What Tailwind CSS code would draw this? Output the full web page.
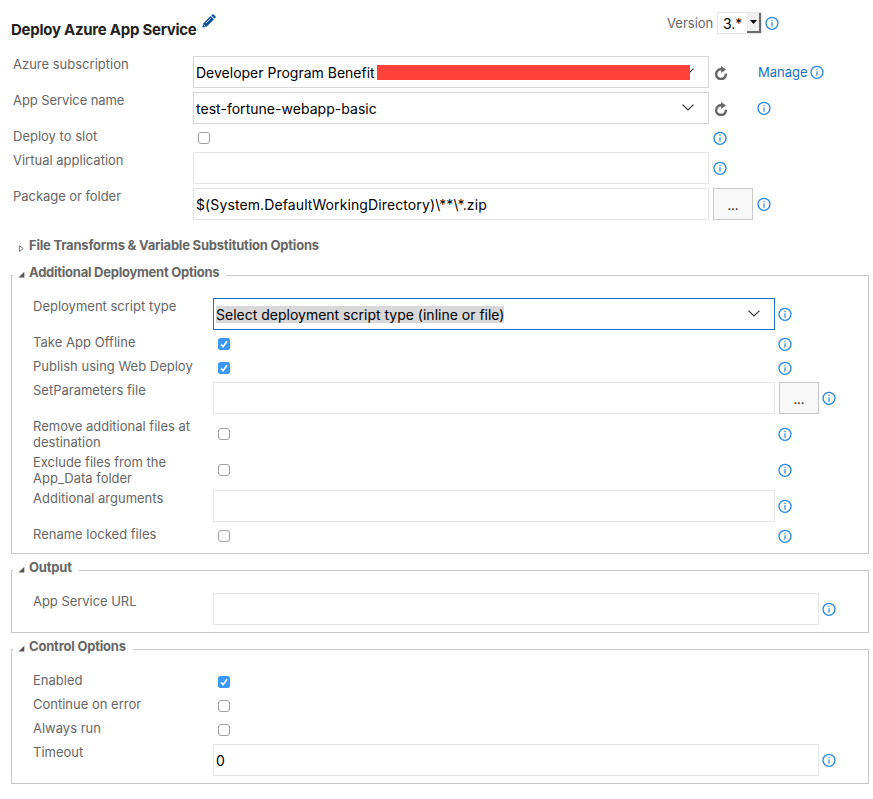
<!DOCTYPE html>
<html lang="en">
<head>
<meta charset="utf-8">
<title>Deploy Azure App Service</title>
<script src="https://cdn.jsdelivr.net/npm/@tailwindcss/browser@4"></script>
</head>
<body class="bg-white font-[Inter,sans-serif] text-[13px] leading-4 text-[#666]">
<svg class="hidden">
  <symbol id="info" viewBox="0 0 14 14"><circle cx="7" cy="7.300" r="6" fill="none" stroke="#2b88d8" stroke-width="1.3"/><path d="M7 6.300v4.400" stroke="#5ba5e3" stroke-width="1.6"/><path d="M7 3.700v1.300" stroke="#5ba5e3" stroke-width="1.6"/></symbol>
  <symbol id="refresh" viewBox="0 0 14 14"><path d="M11.900 7.600A4.900 4.900 0 1 1 7.600 3.300" fill="none" stroke="#666" stroke-width="2.4"/><path d="M7 0l5 3.400L7.200 7z" fill="#666"/></symbol>
  <symbol id="chevron" viewBox="0 0 12 7"><path d="M.5 .6L6 6L11.500 .6" fill="none" stroke="#333" stroke-width="1.2"/></symbol>
  <symbol id="check" viewBox="0 0 12 12"><path d="M3 6.400L5.100 8.700L9 3.200" fill="none" stroke="#fff" stroke-width="1.6"/></symbol>
  <symbol id="open" viewBox="0 0 7 7"><path d="M6.300 .7v5.800H.5z" fill="#555"/></symbol>
</svg>
<main class="h-[799px] w-[873px] overflow-hidden pl-[11px]">
  <header class="flex h-[54px] items-start">
    <h1 class="mt-5 w-[187px] whitespace-nowrap text-[15px] font-bold leading-[19px] tracking-[-0.26px] text-[#222]">Deploy Azure App Service</h1>
    <svg class="ml-1 mt-[14px] size-[14px]" viewBox="0 0 14 14"><path d="M1 9.700L8.600 2.100L11.900 5.400L4.300 13L.4 13.600z" fill="#0b539b"/><path d="M9.300 1.400L10.200.5Q11 0 11.700.6L13.400 2.300Q14 3 13.500 3.800L12.600 4.700z" fill="#0b539b"/><path d="M1.400 10.600L3.500 12.700M4 9l4.700-4.700" stroke="#fff" stroke-width=".8"/></svg>
    <span class="ml-[451px] mt-[15px] w-[50px] whitespace-nowrap">Version</span>
    <div class="mt-3 flex h-[22px] w-[45px] border border-[#e6e6e6] text-[14px] text-black">
      <span class="w-[29px] shrink-0 pl-[5px] pt-[2px] leading-[18px]">3.*</span>
      <span class="flex h-5 w-[14px] shrink-0 items-center justify-center border-b-2 border-r-2 border-[#6b6b6b] bg-[#f0f0f0]"><svg class="h-1 w-[7px]" viewBox="0 0 7 4"><path d="M0 0h7L3.500 4z"/></svg></span>
    </div>
    <svg class="ml-[3px] mt-4 size-[14px]"><use href="#info"/></svg>
  </header>

  <section class="pl-[2px]">
    <div class="flex h-9 items-center">
      <span class="w-[180px] self-start pt-[2px]">Azure subscription</span>
      <div class="relative flex h-8 w-[516px] items-center border border-[#d6d6d6] pl-[2px] text-[14px] text-black"><span class="w-[181px] whitespace-nowrap pt-[2px]">Developer Program Benefit</span><svg class="absolute left-[488px] top-[11px] h-[7px] w-3"><use href="#chevron"/></svg><span class="relative -top-px mt-[3px] h-[15px] w-[313px] bg-[#ff413c]"></span></div>
      <svg class="ml-[5px] mt-[2px] size-[14px]"><use href="#refresh"/></svg>
      <a class="ml-[30px] w-[52px] text-[#1470ce]">Manage</a>
      <svg class="size-[14px]"><use href="#info"/></svg>
    </div>
    <div class="flex h-9 items-center">
      <span class="w-[180px] self-start pt-[2px] tracking-[-0.08px]">App Service name</span>
      <div class="relative flex h-8 w-[516px] items-center border border-[#d6d6d6] pl-[2px] text-[14px] text-black"><span class="pt-[2px] tracking-[0.03px]">test-fortune-webapp-basic</span><svg class="absolute left-[488px] top-[11px] h-[7px] w-3"><use href="#chevron"/></svg></div>
      <svg class="ml-[5px] mt-[2px] size-[14px]"><use href="#refresh"/></svg>
      <svg class="ml-[29px] size-[14px]"><use href="#info"/></svg>
    </div>
    <div class="flex h-6 items-center">
      <span class="w-[180px] self-start pt-[2px]">Deploy to slot</span>
      <span class="ml-[5px] size-3 rounded-[3px] border border-[#a0a0a0] bg-white"></span>
      <svg class="ml-[503px] size-[14px]"><use href="#info"/></svg>
    </div>
    <div class="flex h-9 items-center">
      <span class="w-[180px] self-start pt-[2px]">Virtual application</span>
      <div class="h-8 w-[516px] border border-[#e6e6e6]"></div>
      <svg class="ml-1 size-[14px]"><use href="#info"/></svg>
    </div>
    <div class="flex h-9 items-center">
      <span class="w-[180px] self-start pt-[2px] tracking-[-0.05px]">Package or folder</span>
      <div class="flex h-8 w-[516px] items-center border border-[#e6e6e6] pl-[2px] text-[14px] text-black"><span class="pt-[2px] tracking-[0.11px]">$(System.DefaultWorkingDirectory)\**\*.zip</span></div>
      <span class="ml-1 flex h-8 w-10 items-center justify-center border border-[#c8c8c8] bg-[#f8f8f8] pt-[2px] text-[#222]">...</span>
      <svg class="ml-1 size-[14px]"><use href="#info"/></svg>
    </div>
  </section>

  <div class="mt-[15px] flex h-[30px] pl-2"><svg class="mt-2 h-[7px] w-[5px]" viewBox="0 0 5 7"><path d="M.6 .8L4.200 3.600L.6 6.500z" fill="#fff" stroke="#777"/></svg><h2 class="ml-[5px] font-bold tracking-[-0.21px]">File Transforms &amp; Variable Substitution Options</h2></div>

  <fieldset class="h-[287px] w-[858px] border border-[#c8c8c8] pl-[21px]">
    <legend class="-ml-[20px] flex h-[17px] items-start pl-[5px] pr-[7px]"><svg class="mt-1 size-[7px]"><use href="#open"/></svg><h2 class="ml-1 font-bold leading-[11px] tracking-[-0.25px]">Additional Deployment Options</h2></legend>
    <div class="mt-3 flex h-9 items-center">
      <span class="w-[180px] self-start pt-[2px]">Deployment script type</span>
      <div class="relative flex h-8 w-[562px] items-center border border-[#1a73c7] pl-[2px] text-[14px] text-black"><span class="mt-px h-[17px] bg-[#d8d8d8] leading-[18px]">Select deployment script type (inline or file)</span><svg class="absolute left-[534px] top-[11px] h-[7px] w-3"><use href="#chevron"/></svg></div>
      <svg class="ml-[3px] size-[14px]"><use href="#info"/></svg>
    </div>
    <div class="flex h-6 items-center">
      <span class="w-[180px] self-start pt-[2px] tracking-[0.04px]">Take App Offline</span>
      <svg class="ml-[5px] size-3 rounded-[2.5px] bg-[#3a97fc]"><use href="#check"/></svg>
      <svg class="ml-[548px] size-[14px]"><use href="#info"/></svg>
    </div>
    <div class="flex h-6 items-center">
      <span class="w-[180px] self-start pt-[2px]">Publish using Web Deploy</span>
      <svg class="ml-[5px] size-3 rounded-[2.5px] bg-[#3a97fc]"><use href="#check"/></svg>
      <svg class="ml-[548px] size-[14px]"><use href="#info"/></svg>
    </div>
    <div class="flex h-9 items-center">
      <span class="w-[180px] self-start pt-[2px]">SetParameters file</span>
      <div class="h-8 w-[562px] border border-[#e6e6e6]"></div>
      <span class="ml-1 flex h-8 w-10 items-center justify-center border border-[#c8c8c8] bg-[#f8f8f8] pt-[2px] text-[#222]">...</span>
      <svg class="ml-[3px] size-[14px]"><use href="#info"/></svg>
    </div>
    <div class="flex h-9 items-center">
      <span class="w-[180px] self-start pt-[2px]">Remove additional files at<br>destination</span>
      <span class="ml-[5px] size-3 rounded-[3px] border border-[#a0a0a0] bg-white"></span>
      <svg class="ml-[548px] size-[14px]"><use href="#info"/></svg>
    </div>
    <div class="flex h-9 items-center">
      <span class="w-[180px] self-start pt-[2px]">Exclude files from the<br>App_Data folder</span>
      <span class="ml-[5px] size-3 rounded-[3px] border border-[#a0a0a0] bg-white"></span>
      <svg class="ml-[548px] size-[14px]"><use href="#info"/></svg>
    </div>
    <div class="flex h-9 items-center">
      <span class="w-[180px] self-start pt-[2px]">Additional arguments</span>
      <div class="h-8 w-[562px] border border-[#e6e6e6]"></div>
      <svg class="ml-[3px] size-[14px]"><use href="#info"/></svg>
    </div>
    <div class="flex h-6 items-center">
      <span class="w-[180px] self-start pt-[2px]">Rename locked files</span>
      <span class="ml-[5px] size-3 rounded-[3px] border border-[#a0a0a0] bg-white"></span>
      <svg class="ml-[548px] size-[14px]"><use href="#info"/></svg>
    </div>
  </fieldset>

  <fieldset class="mt-2 h-[71px] w-[858px] border border-[#c8c8c8] pl-[21px]">
    <legend class="-ml-[20px] flex h-[17px] items-start pl-[5px] pr-[7px]"><svg class="mt-1 size-[7px]"><use href="#open"/></svg><h2 class="ml-1 font-bold leading-[11px] tracking-[-0.2px]">Output</h2></legend>
    <div class="mt-3 flex h-9 items-center">
      <span class="w-[180px] self-start pt-[2px] tracking-[-0.04px]">App Service URL</span>
      <div class="h-8 w-[606px] border border-[#e6e6e6]"></div>
      <svg class="ml-[3px] size-[14px]"><use href="#info"/></svg>
    </div>
  </fieldset>

  <fieldset class="mt-2 h-[143px] w-[858px] border border-[#c8c8c8] pl-[21px]">
    <legend class="-ml-[20px] flex h-[17px] items-start pl-[5px] pr-[7px]"><svg class="mt-1 size-[7px]"><use href="#open"/></svg><h2 class="ml-1 font-bold leading-[11px] tracking-[-0.2px]">Control Options</h2></legend>
    <div class="mt-3 flex h-6 items-center">
      <span class="w-[180px] self-start pt-[2px]">Enabled</span>
      <svg class="ml-[5px] size-3 rounded-[2.5px] bg-[#3a97fc]"><use href="#check"/></svg>
    </div>
    <div class="flex h-6 items-center">
      <span class="w-[180px] self-start pt-[2px]">Continue on error</span>
      <span class="ml-[5px] size-3 rounded-[3px] border border-[#a0a0a0] bg-white"></span>
    </div>
    <div class="flex h-6 items-center">
      <span class="w-[180px] self-start pt-[2px]">Always run</span>
      <span class="ml-[5px] size-3 rounded-[3px] border border-[#a0a0a0] bg-white"></span>
    </div>
    <div class="flex h-9 items-center">
      <span class="w-[180px] self-start pt-[2px]">Timeout</span>
      <div class="flex h-8 w-[606px] items-center border border-[#e6e6e6] pl-[2px] text-[14px] text-black"><span class="pt-[2px]">0</span></div>
      <svg class="ml-[3px] size-[14px]"><use href="#info"/></svg>
    </div>
  </fieldset>
</main>
</body>
</html>
